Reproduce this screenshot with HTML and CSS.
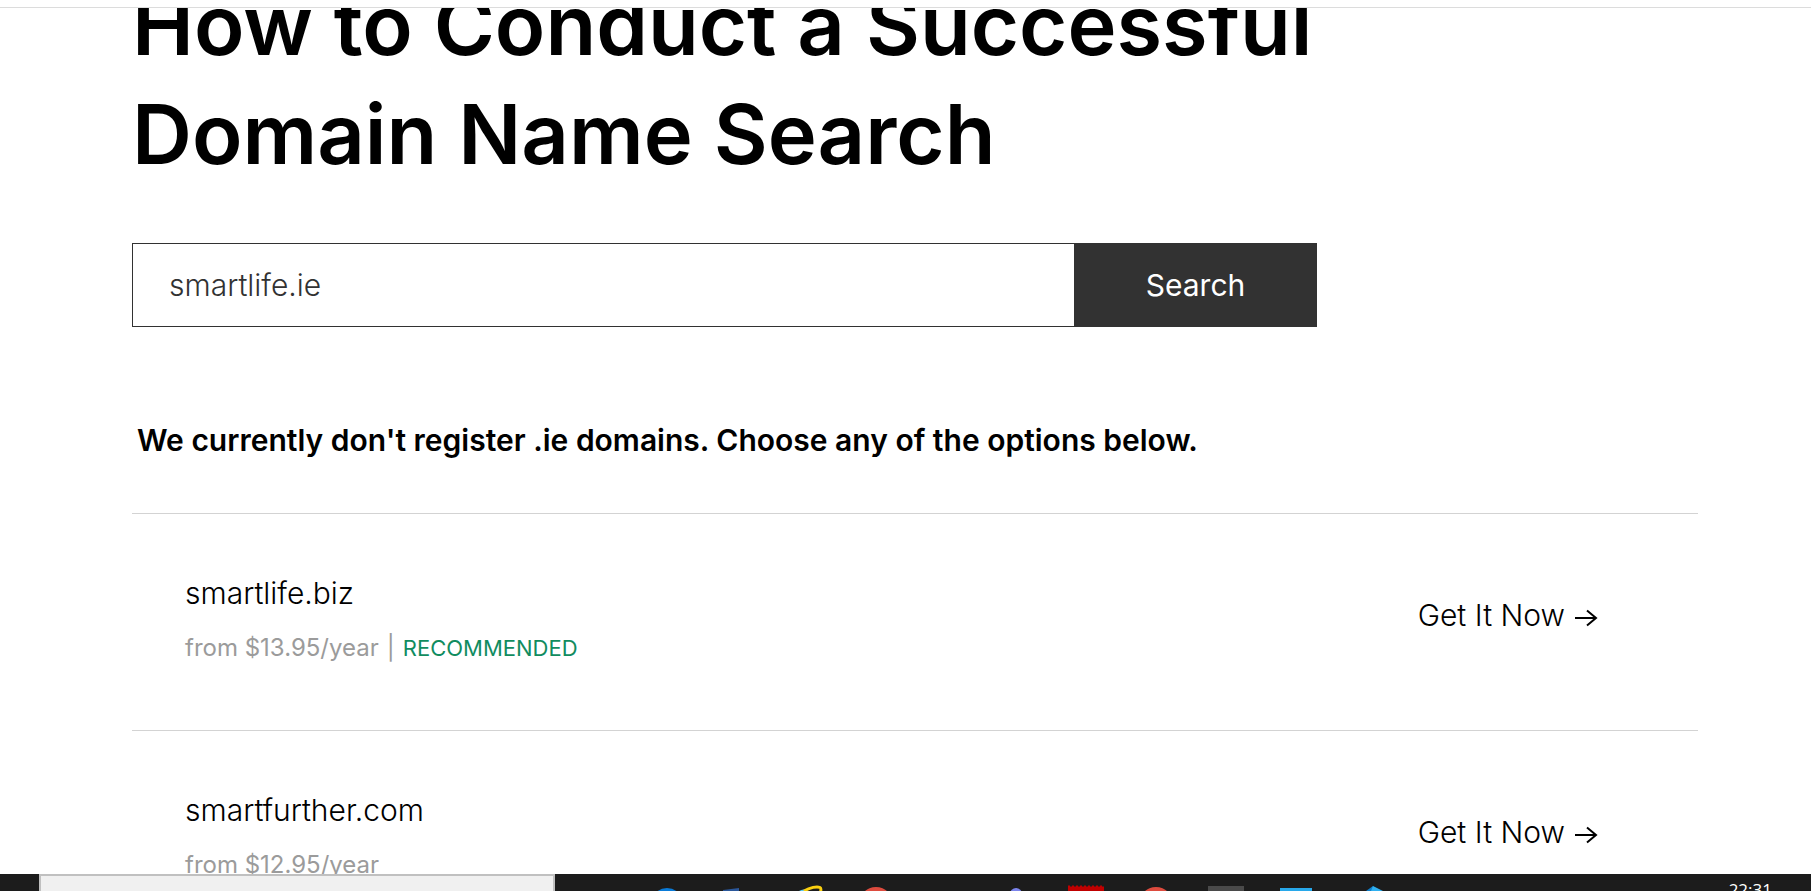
FILE: index.html
```
<!DOCTYPE html>
<html lang="en">
<head>
<meta charset="utf-8">
<title>Domain Name Search</title>
<link rel="stylesheet" href="styles.css">
</head>
<body>
<header class="site-header"></header>
<main class="content">
  <h1 class="title">How to Conduct a Successful Domain Name Search</h1>
  <form class="search">
    <input class="search-input" type="text" value="smartlife.ie" aria-label="Domain name">
    <button class="search-button" type="button">Search</button>
  </form>
  <p class="notice">We currently don't register .ie domains. Choose any of the options below.</p>
  <ul class="results">
    <li class="result">
      <div class="details">
        <div class="domain">smartlife.biz</div>
        <div class="meta"><span>from $13.95/year</span><span>|</span><span class="badge">RECOMMENDED</span></div>
      </div>
      <a class="get" href="#">Get It Now
        <svg class="arrow" viewBox="0 0 24 18" aria-hidden="true"><path d="M1 9H22M13 1.500L22 9L13 16.500"/></svg></a>
    </li>
    <li class="result">
      <div class="details">
        <div class="domain">smartfurther.com</div>
        <div class="meta"><span>from $12.95/year</span></div>
      </div>
      <a class="get" href="#">Get It Now
        <svg class="arrow" viewBox="0 0 24 18" aria-hidden="true"><path d="M1 9H22M13 1.500L22 9L13 16.500"/></svg></a>
    </li>
  </ul>
</main>
<footer class="taskbar">
  <input class="task-search" type="text" aria-label="Search the computer">
  <div class="apps">
    <svg class="app" viewBox="0 0 70 17"><circle cx="36" cy="30" r="16" fill="#0a7bd8"/></svg>
    <svg class="app" viewBox="0 0 70 17"><path d="M22 16L38 14V17H22Z" fill="#2b579a"/></svg>
    <svg class="app" viewBox="0 0 70 17"><path d="M28 17C31 15 34 15 37 17Z" fill="#5cc8ee"/><path d="M33 17C39 13.500 46 12 49 13.500C50.500 14.500 50 16 49.500 18" fill="none" stroke="#fbd00f" stroke-width="3"/></svg>
    <svg class="app" viewBox="0 0 70 17"><circle cx="35" cy="30" r="17" fill="#dd4b3e"/></svg>
    <svg class="app" viewBox="0 0 70 17"></svg>
    <svg class="app" viewBox="0 0 70 17"><circle cx="35" cy="20" r="6" fill="#7b83eb"/></svg>
    <svg class="app" viewBox="0 0 70 17"><path d="M17 12.500H53V17H17Z" fill="#c00000"/><path d="M17 12.500H53" stroke="#c00000" stroke-width="2" stroke-dasharray="2 2"/></svg>
    <svg class="app" viewBox="0 0 70 17"><circle cx="35" cy="30" r="17" fill="#dd4b3e"/></svg>
    <svg class="app" viewBox="0 0 70 17"><path d="M17 12H53V17H17Z" fill="#4a4a4a"/></svg>
    <svg class="app" viewBox="0 0 70 17"><path d="M19 14H51V17H19Z" fill="#28a8ea"/></svg>
    <svg class="app" viewBox="0 0 70 17"><path d="M42 12L35 17H42Z" fill="#0f7fcb"/><path d="M42 12L52 17H40Z" fill="#2fb0f0"/></svg>
  </div>
  <time class="clock">22:31</time>
</footer>
</body>
</html>
```

FILE: styles.css
```
* { box-sizing: border-box; }
body {
  margin: 0;
  height: 100vh;
  display: flex;
  flex-direction: column;
  overflow: hidden;
  background: #fff;
  color: #000;
  font-family: Inter, "Noto Sans", sans-serif;
}
.site-header {
  flex: none;
  height: 8px;
  border-bottom: 1px solid #dcdcdc;
}
.content {
  flex: 1;
  min-height: 0;
  overflow: hidden;
  padding: 0 113px 0 132px;
}
.title {
  margin: -37px 0 54px;
  max-width: 1240px;
  font-size: 83px;
  line-height: 109px;
  font-weight: 600;
}
.search {
  display: flex;
  max-width: 1185px;
  height: 84px;
}
.search-input {
  flex: 1;
  min-width: 0;
  padding: 0 36px;
  border: 1px solid #323232;
  border-right: 0;
  border-radius: 0;
  background: #fff;
  color: #323232;
  font: 300 30px Inter, sans-serif;
  outline: 0;
}
.search-button {
  width: 243px;
  border: 0;
  background: #323232;
  color: #fff;
  font: 400 30px Inter, sans-serif;
}
.notice {
  margin: 92px 0 51px;
  padding-left: 5px;
  font-size: 30px;
  line-height: 43px;
  font-weight: 600;
}
.results {
  margin: 0;
  padding: 0;
  list-style: none;
}
.result {
  display: flex;
  align-items: flex-start;
  justify-content: space-between;
  height: 217px;
  padding: 51px 100px 0 53px;
  border-top: 1px solid #d3d3d3;
}
.domain {
  font-size: 30px;
  line-height: 56px;
  font-weight: 300;
}
.meta {
  display: flex;
  align-items: baseline;
  gap: 8px;
  font-size: 24px;
  line-height: 54px;
  color: #9b9b9b;
}
.badge {
  font-size: 22px;
  color: #118c5f;
}
.get {
  display: flex;
  align-items: center;
  gap: 9px;
  margin-top: 30px;
  color: #000;
  font-size: 30px;
  line-height: 40px;
  font-weight: 300;
  text-decoration: none;
}
.arrow {
  width: 24px;
  height: 18px;
  margin-top: 6px;
  fill: none;
  stroke: #000;
  stroke-width: 2;
}
.taskbar {
  flex: none;
  display: flex;
  height: 17px;
  padding: 0 39px;
  overflow: hidden;
  background: #1c1c1c;
}
.task-search {
  width: 516px;
  height: 40px;
  border: 2px solid #c0c0c0;
  background: #f0f0f0;
}
.apps {
  display: flex;
  margin-left: 76px;
}
.app {
  width: 70px;
  height: 17px;
}
.clock {
  margin: 6px 0 0 auto;
  color: #fff;
  font: 17px/20px "Open Sans", sans-serif;
}
```
